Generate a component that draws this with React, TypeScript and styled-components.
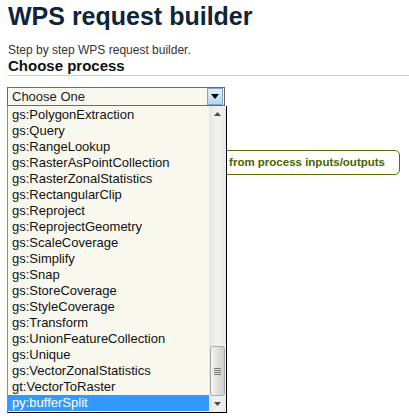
import styled, {createGlobalStyle} from 'styled-components';

const processes = [
  'gs:PolygonExtraction',
  'gs:Query',
  'gs:RangeLookup',
  'gs:RasterAsPointCollection',
  'gs:RasterZonalStatistics',
  'gs:RectangularClip',
  'gs:Reproject',
  'gs:ReprojectGeometry',
  'gs:ScaleCoverage',
  'gs:Simplify',
  'gs:Snap',
  'gs:StoreCoverage',
  'gs:StyleCoverage',
  'gs:Transform',
  'gs:UnionFeatureCollection',
  'gs:Unique',
  'gs:VectorZonalStatistics',
  'gt:VectorToRaster',
  'py:bufferSplit',
];

const selected = 'py:bufferSplit';

const GlobalStyle = createGlobalStyle`
  html, body {
    margin: 0;
    padding: 0;
    background: #fff;
  }
  body {
    font-family: "Liberation Sans", Arial, sans-serif;
    color: #222;
  }
`;

const Page = styled.div`
  position: relative;
  padding: 0 0 0 7px;
  height: 418px;
  overflow: hidden;
`;

const Title = styled.h1`
  margin: 2px 0 0 1px;
  font-size: 25px;
  line-height: 28px;
  font-weight: bold;
  color: #10243a;
`;

const Intro = styled.p`
  margin: 13px 0 0 1px;
  font-size: 12px;
  line-height: 14px;
  color: #333;
`;

const SectionHeading = styled.h2`
  margin: 0;
  padding: 0 0 1px 1px;
  font-size: 15px;
  line-height: 17px;
  font-weight: bold;
  color: #111;
  border-bottom: 1px solid #c9d9a9;
`;

const SelectWrap = styled.div`
  position: relative;
  margin-top: 11px;
  width: 218px;
`;

const SelectBox = styled.div`
  display: flex;
  align-items: center;
  justify-content: space-between;
  height: 17px;
  border: 1px solid #6b6b6b;
  background: #f8f8ef;
  font-size: 13px;
  padding-left: 4px;
`;

const ArrowButton = styled.div`
  display: flex;
  align-items: center;
  justify-content: center;
  width: 14px;
  height: 15px;
  margin-right: 1px;
  border: 1px solid #7ea6cb;
  background: linear-gradient(#e2eefb, #b9d5f2);
`;

// open dropdown, drawn over the rest of the form
const List = styled.div`
  position: absolute;
  top: 19px;
  left: 0;
  z-index: 2;
  display: flex;
  width: 218px;
  height: 306px;
  background: #f8f8ef;
  border-left: 1px solid #8a8a8a;
  border-right: 1px solid #000;
  border-bottom: 1px solid #000;
  box-sizing: content-box;
`;

const Options = styled.div`
  flex: 1;
  padding-top: 1px;
`;

const Option = styled.div<{$active: boolean}>`
  height: 16px;
  line-height: 16px;
  font-size: 13px;
  padding-left: 4px;
  color: ${(p) => (p.$active ? '#fff' : '#111')};
  background: ${(p) => (p.$active ? '#3399ff' : 'transparent')};
  white-space: nowrap;
`;

const ScrollTrack = styled.div`
  display: flex;
  flex-direction: column;
  width: 17px;
  background: linear-gradient(90deg, #e6e6e6, #f1f1f1 50%, #e8e8e8);
`;

const ScrollArrow = styled.div`
  display: flex;
  align-items: center;
  justify-content: center;
  height: 16px;
`;

const ScrollSpace = styled.div`
  flex: 1;
  display: flex;
  flex-direction: column;
  justify-content: flex-end;
`;

const Thumb = styled.div`
  display: flex;
  flex-direction: column;
  align-items: center;
  justify-content: center;
  gap: 1px;
  height: 48px;
  margin: 0 1px;
  border: 1px solid #a8a8a8;
  border-radius: 3px;
  background: linear-gradient(90deg, #f4f4f4, #dcdcdc 60%, #cfcfcf);
`;

const Grip = styled.span`
  display: block;
  width: 7px;
  height: 1px;
  background: #7a7a7a;
`;

const ActionRow = styled.div`
  display: flex;
  justify-content: flex-end;
  margin-top: 44px;
  padding-right: 9px;
`;

const ActionButton = styled.div`
  height: 23px;
  line-height: 23px;
  padding: 0 14px 0 40px;
  border: 1px solid #5a7200;
  border-radius: 5px;
  font-size: 11.5px;
  font-weight: bold;
  color: #4a6300;
  background: #fff;
  white-space: nowrap;
`;

function Triangle({up}: {up?: boolean}) {
  return (
    <svg width='7' height='4' viewBox='0 0 7 4'>
      <path d={up ? 'M0 4 L3.5 0 L7 4 Z' : 'M0 0 L7 0 L3.5 4 Z'} fill='#4a4a4a' />
    </svg>
  );
}

export default function App() {
  return (
    <>
      <GlobalStyle />
      <Page>
        <Title>WPS request builder</Title>
        <Intro>Step by step WPS request builder.</Intro>
        <SectionHeading>Choose process</SectionHeading>
        <SelectWrap>
          <SelectBox>
            <span>Choose One</span>
            <ArrowButton>
              <svg width='8' height='5' viewBox='0 0 8 5'>
                <path d='M0 0 L8 0 L4 5 Z' fill='#000' />
              </svg>
            </ArrowButton>
          </SelectBox>
          <List>
            <Options>
              {processes.map((name) => (
                <Option key={name} $active={name === selected}>
                  {name}
                </Option>
              ))}
            </Options>
            <ScrollTrack>
              <ScrollArrow>
                <Triangle up />
              </ScrollArrow>
              <ScrollSpace>
                <Thumb>
                  <Grip />
                  <Grip />
                  <Grip />
                  <Grip />
                </Thumb>
              </ScrollSpace>
              <ScrollArrow>
                <Triangle />
              </ScrollArrow>
            </ScrollTrack>
          </List>
        </SelectWrap>
        <ActionRow>
          <ActionButton>from process inputs/outputs</ActionButton>
        </ActionRow>
      </Page>
    </>
  );
}
